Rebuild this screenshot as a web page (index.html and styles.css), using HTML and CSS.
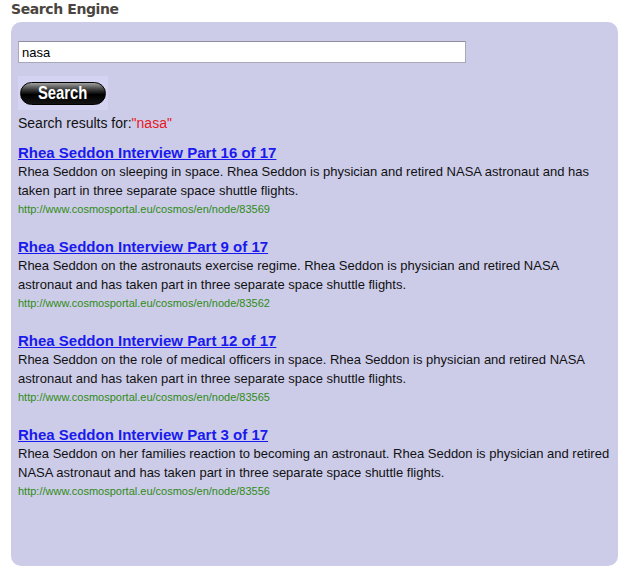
FILE: index.html
```html
<!DOCTYPE html>
<html lang="en">
<head>
    <meta charset="UTF-8">
    <title>Search Engine</title>
    <link rel="stylesheet" href="styles.css">
</head>
<body>
    <div class="page">
        <h2 class="page-title">Search Engine</h2>
        <div class="panel">
            <form class="search-form" onsubmit="return false;">
                <input type="text" class="search-input" value="nasa">
                <div class="button-wrap">
                    <button type="submit" class="search-button"><span>Search</span></button>
                </div>
            </form>

            <p class="results-for">Search results for:<span class="query">"nasa"</span></p>

            <div class="result">
                <a href="#" class="result-title">Rhea Seddon Interview Part 16 of 17</a>
                <p class="result-desc">Rhea Seddon on sleeping in space. Rhea Seddon is physician and retired NASA astronaut and has taken part in three separate space shuttle flights.</p>
                <div class="result-url">http://www.cosmosportal.eu/cosmos/en/node/83569</div>
            </div>

            <div class="result">
                <a href="#" class="result-title">Rhea Seddon Interview Part 9 of 17</a>
                <p class="result-desc">Rhea Seddon on the astronauts exercise regime. Rhea Seddon is physician and retired NASA astronaut and has taken part in three separate space shuttle flights.</p>
                <div class="result-url">http://www.cosmosportal.eu/cosmos/en/node/83562</div>
            </div>

            <div class="result">
                <a href="#" class="result-title">Rhea Seddon Interview Part 12 of 17</a>
                <p class="result-desc">Rhea Seddon on the role of medical officers in space. Rhea Seddon is physician and retired NASA astronaut and has taken part in three separate space shuttle flights.</p>
                <div class="result-url">http://www.cosmosportal.eu/cosmos/en/node/83565</div>
            </div>

            <div class="result">
                <a href="#" class="result-title">Rhea Seddon Interview Part 3 of 17</a>
                <p class="result-desc">Rhea Seddon on her families reaction to becoming an astronaut. Rhea Seddon is physician and retired NASA astronaut and has taken part in three separate space shuttle flights.</p>
                <div class="result-url">http://www.cosmosportal.eu/cosmos/en/node/83556</div>
            </div>
        </div>
    </div>
</body>
</html>
```

FILE: styles.css
```css
* {
    margin: 0;
    padding: 0;
    box-sizing: border-box;
}

body {
    background-color: #fff;
    font-family: 'Liberation Sans', Arial, sans-serif;
    color: #111;
}

.page {
    width: 618px;
    padding-left: 11px;
}

.page-title {
    font-family: 'DejaVu Sans', Verdana, sans-serif;
    font-size: 14px;
    font-weight: bold;
    color: #4a4540;
    height: 22px;
    line-height: 18px;
    letter-spacing: -0.4px;
}

.panel {
    background-color: #cccce9;
    border-radius: 10px;
    height: 544px;
    padding: 19px 7px 0 7px;
}

.search-input {
    display: block;
    width: 448px;
    height: 22px;
    border: 1px solid #a8a8b8;
    border-top-color: #8e8e9e;
    background: #fff;
    font-family: 'Liberation Sans', Arial, sans-serif;
    font-size: 13px;
    padding: 0 3px;
    color: #000;
}

.button-wrap {
    width: 90px;
    height: 34px;
    margin-top: 13px;
    background: #d4d4f2;
    display: flex;
    align-items: center;
    justify-content: center;
}

.search-button {
    width: 86px;
    height: 23px;
    border: 1px solid #000;
    border-radius: 12px;
    background: linear-gradient(to bottom, #a0a0a0 0%, #404040 30%, #000 55%, #151515 100%);
    color: #fff;
    cursor: pointer;
    display: flex;
    align-items: center;
    justify-content: center;
}

.search-button span {
    display: inline-block;
    font-family: 'Liberation Sans', Arial, sans-serif;
    font-size: 19px;
    font-weight: bold;
    line-height: 20px;
    transform: scaleX(0.78);
}

.results-for {
    font-size: 14px;
    line-height: 18px;
    margin-top: 4px;
    margin-bottom: 12px;
}

.query {
    color: #e8161c;
}

.result {
    margin-bottom: 20px;
}

.result-title {
    display: block;
    font-size: 15px;
    font-weight: bold;
    color: #1a1aee;
    text-decoration: underline;
    line-height: 18px;
}

.result-desc {
    font-size: 13px;
    line-height: 19px;
}

.result-url {
    font-size: 11px;
    line-height: 18px;
    color: #2e8b14;
}
```
